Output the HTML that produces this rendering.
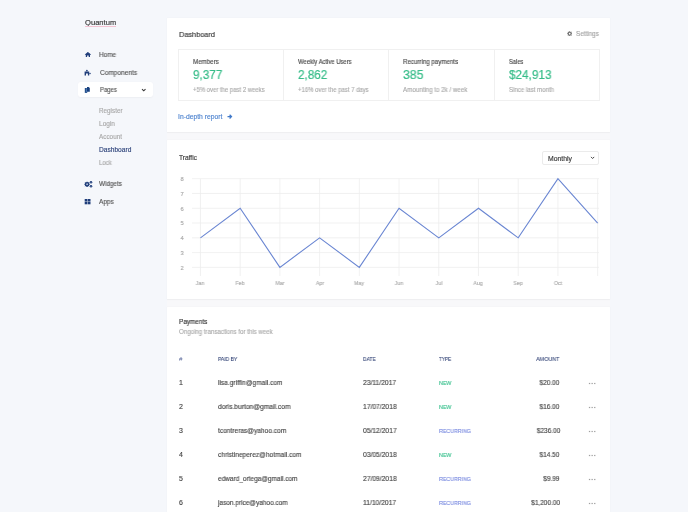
<!DOCTYPE html>
<html><head><meta charset="utf-8"><style>
html,body{margin:0;padding:0;}
body{width:688px;height:512px;overflow:hidden;background:#f5f7fb;position:relative;font-family:"Liberation Sans",sans-serif;}
.t{position:absolute;white-space:nowrap;-webkit-text-stroke:0.14px currentColor;will-change:transform;}
.card{position:absolute;background:#fff;border-radius:0.5px;box-shadow:0 0.8px 1.2px rgba(0,0,0,0.04),0 0 2.5px rgba(0,0,0,0.02);}
</style></head><body>
<div class="t" style="left:84.90px;top:19px;font-size:7.6px;line-height:7.6px;color:#2e2e2e;transform:scaleX(0.9949);transform-origin:0 0;">Quantum</div>
<div style="position:absolute;left:85px;top:26.3px;width:31px;height:1px;background:#f4c4d3"></div>
<div class="t" style="left:99.40px;top:52px;font-size:6.7px;line-height:6.7px;color:#555555;transform:scaleX(0.9622);transform-origin:0 0;">Home</div>
<div class="t" style="left:99.50px;top:70px;font-size:6.8px;line-height:6.8px;color:#555555;transform:scaleX(0.9596);transform-origin:0 0;">Components</div>
<div style="position:absolute;left:77.6px;top:82.0px;width:75px;height:14.8px;background:#fff;border-radius:3px;box-shadow:0 0.8px 1.5px rgba(0,0,0,0.035)"></div>
<div class="t" style="left:99.50px;top:87px;font-size:6.6px;line-height:6.6px;color:#555555;transform:scaleX(0.8979);transform-origin:0 0;">Pages</div>
<div class="t" style="left:98.90px;top:108px;font-size:6.3px;line-height:6.3px;color:#a9a9a9;transform:scaleX(1.0017);transform-origin:0 0;">Register</div>
<div class="t" style="left:99.00px;top:121px;font-size:6.3px;line-height:6.3px;color:#a9a9a9;transform:scaleX(1.0379);transform-origin:0 0;">Login</div>
<div class="t" style="left:99.10px;top:134px;font-size:6.3px;line-height:6.3px;color:#a9a9a9;transform:scaleX(1.0105);transform-origin:0 0;">Account</div>
<div class="t" style="left:99.10px;top:147px;font-size:6.5px;line-height:6.5px;color:#33487e;transform:scaleX(1.0158);transform-origin:0 0;-webkit-text-stroke:0.16px #33487e;">Dashboard</div>
<div class="t" style="left:99.10px;top:160px;font-size:6.3px;line-height:6.3px;color:#a9a9a9;transform:scaleX(0.9461);transform-origin:0 0;">Lock</div>
<div class="t" style="left:99.30px;top:181px;font-size:6.6px;line-height:6.6px;color:#555555;transform:scaleX(0.9606);transform-origin:0 0;">Widgets</div>
<div class="t" style="left:99.30px;top:199px;font-size:6.6px;line-height:6.6px;color:#555555;transform:scaleX(0.9773);transform-origin:0 0;">Apps</div>
<svg style="position:absolute;left:84px;top:51px" width="8" height="7" viewBox="0 0 8 7"><path d="M3.9 0.9 L7 3.4 L6.5 4 L3.9 1.9 L1.3 4 L0.8 3.4 Z" fill="#1f3d7a"/><path d="M1.8 3.3 L3.9 1.6 L6 3.3 V6 H4.7 V4.5 H3.1 V6 H1.8 Z" fill="#1f3d7a"/></svg>
<svg style="position:absolute;left:84px;top:69px" width="8" height="8" viewBox="0 0 8 8"><circle cx="2.9" cy="1.6" r="0.85" fill="#1f3d7a"/><path d="M0.6 2.5 H5.2 V6.4 H3.9 V4.6 H2.0 V6.4 H0.6 Z" fill="#1f3d7a"/><circle cx="6.0" cy="4.4" r="0.75" fill="#1f3d7a"/></svg>
<svg style="position:absolute;left:84px;top:86px" width="7" height="8" viewBox="0 0 7 8"><path d="M0.8 2.0 H3.2 V6.9 H0.8 Z" fill="#24508c"/><path d="M3.0 1.0 H4.6 L5.8 2.1 V5.7 H3.0 Z" fill="#173f7e"/><path d="M2.5 2.3 H3.0 V6.0 H2.5 Z" fill="#6f9ad0"/></svg>
<svg style="position:absolute;left:141.0px;top:87.8px" width="6" height="5" viewBox="0 0 6 5"><path d="M1.0 1.1 L2.75 2.8 L4.5 1.1" stroke="#3a3a3a" stroke-width="1.1" fill="none"/></svg>
<svg style="position:absolute;left:84px;top:180px" width="9" height="8" viewBox="0 0 9 8"><circle cx="3.1" cy="4.3" r="1.7" fill="none" stroke="#1f3d7a" stroke-width="1.4"/><g stroke="#1f3d7a" stroke-width="0.9"><path d="M3.1 1.7V6.9M0.5 4.3H5.7M1.25 2.45L4.95 6.15M1.25 6.15L4.95 2.45"/></g><circle cx="3.1" cy="4.3" r="0.8" fill="#e3eaf5"/><circle cx="7.0" cy="2.2" r="1.25" fill="#1f3d7a"/><circle cx="7.0" cy="6.2" r="1.25" fill="#1f3d7a"/><circle cx="7.0" cy="2.2" r="0.4" fill="#e3eaf5"/><circle cx="7.0" cy="6.2" r="0.4" fill="#e3eaf5"/></svg>
<svg style="position:absolute;left:84px;top:198px" width="8" height="8" viewBox="0 0 8 8"><rect x="0.7" y="1.0" width="2.7" height="2.5" fill="#1f3d7a"/><rect x="3.8" y="1.0" width="2.7" height="2.5" fill="#1f3d7a"/><rect x="0.7" y="3.8" width="2.7" height="2.5" fill="#1f3d7a"/><rect x="3.8" y="3.8" width="2.7" height="2.5" fill="#1f3d7a"/></svg>
<div style="position:absolute;left:167.2px;top:132px;width:442.6px;height:175.5px;background:#f8f8fa"></div>
<div class="card" style="left:167.2px;top:18.2px;width:442.60px;height:114.10px"></div>
<div class="card" style="left:167.2px;top:139.6px;width:442.60px;height:159.40px"></div>
<div class="card" style="left:167.2px;top:307.0px;width:442.60px;height:253.00px"></div>
<div class="t" style="left:178.90px;top:31px;font-size:7.8px;line-height:7.8px;color:#333;transform:scaleX(0.9435);transform-origin:0 0;">Dashboard</div>
<svg style="position:absolute;left:566.9px;top:31.1px" width="5.4" height="5.4" viewBox="0 0 5.4 5.4"><g fill="#6e6e6e"><circle cx="2.7" cy="2.7" r="1.8"/><rect x="2.2" y="0.15" width="1" height="5.1"/><rect x="0.15" y="2.2" width="5.1" height="1"/><rect x="2.2" y="0.15" width="1" height="5.1" transform="rotate(45 2.7 2.7)"/><rect x="2.2" y="0.15" width="1" height="5.1" transform="rotate(-45 2.7 2.7)"/></g><circle cx="2.7" cy="2.7" r="0.85" fill="#fff"/></svg>
<div class="t" style="left:576.00px;top:31px;font-size:6.6px;line-height:6.6px;color:#a3a3a3;transform:scaleX(0.9603);transform-origin:0 0;">Settings</div>
<div style="position:absolute;left:178px;top:49px;width:422px;height:52px;border:1px solid #f0f0f0;box-sizing:border-box"></div>
<div style="position:absolute;left:283px;top:49px;width:1px;height:52px;background:#f0f0f0"></div>
<div style="position:absolute;left:388px;top:49px;width:1px;height:52px;background:#f0f0f0"></div>
<div style="position:absolute;left:494px;top:49px;width:1px;height:52px;background:#f0f0f0"></div>
<div class="t" style="left:193.10px;top:59px;font-size:6.5px;line-height:6.5px;color:#484848;transform:scaleX(0.9523);transform-origin:0 0;">Members</div>
<div class="t" style="left:193.10px;top:69px;font-size:12.8px;line-height:12.8px;color:#38bd8a;transform:scaleX(0.9149);transform-origin:0 0;-webkit-text-stroke:0.22px #38bd8a;">9,377</div>
<div class="t" style="left:193.10px;top:87px;font-size:6.3px;line-height:6.3px;color:#ababab;transform:scaleX(0.9443);transform-origin:0 0;">+5% over the past 2 weeks</div>
<div class="t" style="left:298.30px;top:59px;font-size:6.5px;line-height:6.5px;color:#484848;transform:scaleX(0.9067);transform-origin:0 0;">Weekly Active Users</div>
<div class="t" style="left:298.30px;top:69px;font-size:12.8px;line-height:12.8px;color:#38bd8a;transform:scaleX(0.9118);transform-origin:0 0;-webkit-text-stroke:0.22px #38bd8a;">2,862</div>
<div class="t" style="left:298.30px;top:87px;font-size:6.3px;line-height:6.3px;color:#ababab;transform:scaleX(0.9455);transform-origin:0 0;">+16% over the past 7 days</div>
<div class="t" style="left:403.40px;top:59px;font-size:6.5px;line-height:6.5px;color:#484848;transform:scaleX(0.9474);transform-origin:0 0;">Recurring payments</div>
<div class="t" style="left:403.40px;top:69px;font-size:12.8px;line-height:12.8px;color:#38bd8a;transform:scaleX(0.9602);transform-origin:0 0;-webkit-text-stroke:0.22px #38bd8a;">385</div>
<div class="t" style="left:403.40px;top:87px;font-size:6.3px;line-height:6.3px;color:#ababab;transform:scaleX(0.9847);transform-origin:0 0;">Amounting to 2k / week</div>
<div class="t" style="left:508.80px;top:59px;font-size:6.5px;line-height:6.5px;color:#484848;transform:scaleX(0.8796);transform-origin:0 0;">Sales</div>
<div class="t" style="left:508.80px;top:69px;font-size:12.8px;line-height:12.8px;color:#38bd8a;transform:scaleX(0.9185);transform-origin:0 0;-webkit-text-stroke:0.22px #38bd8a;">$24,913</div>
<div class="t" style="left:508.80px;top:87px;font-size:6.3px;line-height:6.3px;color:#ababab;transform:scaleX(0.9662);transform-origin:0 0;">Since last month</div>
<div class="t" style="left:178.20px;top:114px;font-size:6.7px;line-height:6.7px;color:#4f84cf;transform:scaleX(1.0102);transform-origin:0 0;">In-depth report</div>
<svg style="position:absolute;left:226.5px;top:114px" width="6" height="6" viewBox="0 0 6 6"><path d="M0.5 2.6H4.6M2.6 0.7L4.5 2.6L2.6 4.5" stroke="#4079c9" stroke-width="1.25" fill="none"/></svg>
<div class="t" style="left:178.70px;top:155px;font-size:6.6px;line-height:6.6px;color:#333;transform:scaleX(0.9904);transform-origin:0 0;">Traffic</div>
<div style="position:absolute;left:542.4px;top:150.5px;width:56.3px;height:14.5px;border:0.8px solid #ebebeb;border-radius:2px;box-sizing:border-box;background:#fff"></div>
<div class="t" style="left:547.70px;top:156px;font-size:6.8px;line-height:6.8px;color:#333;transform:scaleX(1.0039);transform-origin:0 0;">Monthly</div>
<svg style="position:absolute;left:589.5px;top:156px" width="5.5" height="4" viewBox="0 0 5.5 4"><path d="M1 0.9 L2.6 2.5 L4.2 0.9" stroke="#333" stroke-width="0.9" fill="none"/></svg>
<svg style="position:absolute;left:0;top:0" width="688" height="512" viewBox="0 0 688 512"><line x1="192" y1="267.38" x2="599.0" y2="267.38" stroke="#eeeeee" stroke-width="0.8"/><line x1="192" y1="252.60" x2="599.0" y2="252.60" stroke="#eeeeee" stroke-width="0.8"/><line x1="192" y1="237.82" x2="599.0" y2="237.82" stroke="#eeeeee" stroke-width="0.8"/><line x1="192" y1="223.04" x2="599.0" y2="223.04" stroke="#eeeeee" stroke-width="0.8"/><line x1="192" y1="208.26" x2="599.0" y2="208.26" stroke="#eeeeee" stroke-width="0.8"/><line x1="192" y1="193.48" x2="599.0" y2="193.48" stroke="#eeeeee" stroke-width="0.8"/><line x1="192" y1="178.70" x2="599.0" y2="178.70" stroke="#eeeeee" stroke-width="0.8"/><line x1="200.45" y1="178.70" x2="200.45" y2="276.0" stroke="#eeeeee" stroke-width="0.8"/><line x1="240.17" y1="178.70" x2="240.17" y2="276.0" stroke="#eeeeee" stroke-width="0.8"/><line x1="279.89" y1="178.70" x2="279.89" y2="276.0" stroke="#eeeeee" stroke-width="0.8"/><line x1="319.61" y1="178.70" x2="319.61" y2="276.0" stroke="#eeeeee" stroke-width="0.8"/><line x1="359.33" y1="178.70" x2="359.33" y2="276.0" stroke="#eeeeee" stroke-width="0.8"/><line x1="399.05" y1="178.70" x2="399.05" y2="276.0" stroke="#eeeeee" stroke-width="0.8"/><line x1="438.77" y1="178.70" x2="438.77" y2="276.0" stroke="#eeeeee" stroke-width="0.8"/><line x1="478.49" y1="178.70" x2="478.49" y2="276.0" stroke="#eeeeee" stroke-width="0.8"/><line x1="518.21" y1="178.70" x2="518.21" y2="276.0" stroke="#eeeeee" stroke-width="0.8"/><line x1="557.93" y1="178.70" x2="557.93" y2="276.0" stroke="#eeeeee" stroke-width="0.8"/><line x1="597.65" y1="178.70" x2="597.65" y2="276.0" stroke="#eeeeee" stroke-width="0.8"/><polyline points="200.45,237.82 240.17,208.26 279.89,267.38 319.61,237.82 359.33,267.38 399.05,208.26 438.77,237.82 478.49,208.26 518.21,237.82 557.93,178.70 597.65,223.04" fill="none" stroke="#6a86d2" stroke-width="1.1" stroke-linejoin="miter"/></svg>
<div class="t" style="left:132.30px;width:100px;text-align:center;top:266px;font-size:5.8px;line-height:5.8px;color:#ababab;">2</div>
<div class="t" style="left:132.30px;width:100px;text-align:center;top:251px;font-size:5.8px;line-height:5.8px;color:#ababab;">3</div>
<div class="t" style="left:132.30px;width:100px;text-align:center;top:236px;font-size:5.8px;line-height:5.8px;color:#ababab;">4</div>
<div class="t" style="left:132.30px;width:100px;text-align:center;top:221px;font-size:5.8px;line-height:5.8px;color:#ababab;">5</div>
<div class="t" style="left:132.30px;width:100px;text-align:center;top:207px;font-size:5.8px;line-height:5.8px;color:#ababab;">6</div>
<div class="t" style="left:132.30px;width:100px;text-align:center;top:192px;font-size:5.8px;line-height:5.8px;color:#ababab;">7</div>
<div class="t" style="left:132.30px;width:100px;text-align:center;top:177px;font-size:5.8px;line-height:5.8px;color:#ababab;">8</div>
<div class="t" style="left:150.45px;width:100px;text-align:center;top:281px;font-size:5.9px;line-height:5.9px;color:#ababab;transform:scaleX(0.9);transform-origin:50% 0;">Jan</div>
<div class="t" style="left:190.17px;width:100px;text-align:center;top:281px;font-size:5.9px;line-height:5.9px;color:#ababab;transform:scaleX(0.9);transform-origin:50% 0;">Feb</div>
<div class="t" style="left:229.89px;width:100px;text-align:center;top:281px;font-size:5.9px;line-height:5.9px;color:#ababab;transform:scaleX(0.9);transform-origin:50% 0;">Mar</div>
<div class="t" style="left:269.61px;width:100px;text-align:center;top:281px;font-size:5.9px;line-height:5.9px;color:#ababab;transform:scaleX(0.9);transform-origin:50% 0;">Apr</div>
<div class="t" style="left:309.33px;width:100px;text-align:center;top:281px;font-size:5.9px;line-height:5.9px;color:#ababab;transform:scaleX(0.9);transform-origin:50% 0;">May</div>
<div class="t" style="left:349.05px;width:100px;text-align:center;top:281px;font-size:5.9px;line-height:5.9px;color:#ababab;transform:scaleX(0.9);transform-origin:50% 0;">Jun</div>
<div class="t" style="left:388.77px;width:100px;text-align:center;top:281px;font-size:5.9px;line-height:5.9px;color:#ababab;transform:scaleX(0.9);transform-origin:50% 0;">Jul</div>
<div class="t" style="left:428.49px;width:100px;text-align:center;top:281px;font-size:5.9px;line-height:5.9px;color:#ababab;transform:scaleX(0.9);transform-origin:50% 0;">Aug</div>
<div class="t" style="left:468.21px;width:100px;text-align:center;top:281px;font-size:5.9px;line-height:5.9px;color:#ababab;transform:scaleX(0.9);transform-origin:50% 0;">Sep</div>
<div class="t" style="left:507.93px;width:100px;text-align:center;top:281px;font-size:5.9px;line-height:5.9px;color:#ababab;transform:scaleX(0.9);transform-origin:50% 0;">Oct</div>
<div class="t" style="left:178.50px;top:319px;font-size:6.6px;line-height:6.6px;color:#333;transform:scaleX(0.9678);transform-origin:0 0;">Payments</div>
<div class="t" style="left:178.50px;top:329px;font-size:6.3px;line-height:6.3px;color:#ababab;transform:scaleX(0.9694);transform-origin:0 0;">Ongoing transactions for this week</div>
<div class="t" style="left:178.50px;top:356px;font-size:6.2px;line-height:6.2px;color:#56659a;-webkit-text-stroke:0;">#</div>
<div class="t" style="left:218.20px;top:356px;font-size:6.1px;line-height:6.1px;color:#3f4f7f;transform:scaleX(0.8171);transform-origin:0 0;">PAID BY</div>
<div class="t" style="left:363.10px;top:356px;font-size:6.1px;line-height:6.1px;color:#3f4f7f;transform:scaleX(0.8092);transform-origin:0 0;">DATE</div>
<div class="t" style="left:438.60px;top:356px;font-size:6.1px;line-height:6.1px;color:#3f4f7f;transform:scaleX(0.7657);transform-origin:0 0;">TYPE</div>
<div class="t" style="right:128.40px;top:356px;font-size:6.1px;line-height:6.1px;color:#3f4f7f;transform:scaleX(0.8815);transform-origin:100% 0;">AMOUNT</div>
<div class="t" style="left:178.60px;top:379px;font-size:7.0px;line-height:7.0px;color:#444;">1</div>
<div class="t" style="left:217.80px;top:379px;font-size:7.0px;line-height:7.0px;color:#444;transform:scaleX(0.9424);transform-origin:0 0;">lisa.griffin@gmail.com</div>
<div class="t" style="left:363.10px;top:379px;font-size:7.0px;line-height:7.0px;color:#444;transform:scaleX(0.96);transform-origin:0 0;">23/11/2017</div>
<div class="t" style="left:438.70px;top:381px;font-size:5.8px;line-height:5.8px;color:#3cc18f;transform:scaleX(0.91);transform-origin:0 0;">NEW</div>
<div class="t" style="right:128.20px;top:379px;font-size:7.0px;line-height:7.0px;color:#444;transform:scaleX(0.93);transform-origin:100% 0;">$20.00</div>
<svg style="position:absolute;left:588px;top:381px" width="9" height="4" viewBox="0 0 9 4"><g fill="#a0a0a0"><rect x="0.9" y="1.9" width="1.3" height="1.2"/><rect x="3.5" y="1.9" width="1.3" height="1.2"/><rect x="6.1" y="1.9" width="1.3" height="1.2"/></g></svg>
<div class="t" style="left:178.60px;top:403px;font-size:7.0px;line-height:7.0px;color:#444;">2</div>
<div class="t" style="left:217.80px;top:403px;font-size:7.0px;line-height:7.0px;color:#444;transform:scaleX(0.9543);transform-origin:0 0;">doris.burton@gmail.com</div>
<div class="t" style="left:363.10px;top:403px;font-size:7.0px;line-height:7.0px;color:#444;transform:scaleX(0.96);transform-origin:0 0;">17/07/2018</div>
<div class="t" style="left:438.70px;top:405px;font-size:5.8px;line-height:5.8px;color:#3cc18f;transform:scaleX(0.91);transform-origin:0 0;">NEW</div>
<div class="t" style="right:128.20px;top:403px;font-size:7.0px;line-height:7.0px;color:#444;transform:scaleX(0.93);transform-origin:100% 0;">$16.00</div>
<svg style="position:absolute;left:588px;top:405px" width="9" height="4" viewBox="0 0 9 4"><g fill="#a0a0a0"><rect x="0.9" y="1.9" width="1.3" height="1.2"/><rect x="3.5" y="1.9" width="1.3" height="1.2"/><rect x="6.1" y="1.9" width="1.3" height="1.2"/></g></svg>
<div class="t" style="left:178.60px;top:427px;font-size:7.0px;line-height:7.0px;color:#444;">3</div>
<div class="t" style="left:217.80px;top:427px;font-size:7.0px;line-height:7.0px;color:#444;transform:scaleX(0.9411);transform-origin:0 0;">tcontreras@yahoo.com</div>
<div class="t" style="left:363.10px;top:427px;font-size:7.0px;line-height:7.0px;color:#444;transform:scaleX(0.96);transform-origin:0 0;">05/12/2017</div>
<div class="t" style="left:438.70px;top:429px;font-size:5.8px;line-height:5.8px;color:#7b8ce0;transform:scaleX(0.91);transform-origin:0 0;">RECURRING</div>
<div class="t" style="right:128.20px;top:427px;font-size:7.0px;line-height:7.0px;color:#444;transform:scaleX(0.93);transform-origin:100% 0;">$236.00</div>
<svg style="position:absolute;left:588px;top:429px" width="9" height="4" viewBox="0 0 9 4"><g fill="#a0a0a0"><rect x="0.9" y="1.9" width="1.3" height="1.2"/><rect x="3.5" y="1.9" width="1.3" height="1.2"/><rect x="6.1" y="1.9" width="1.3" height="1.2"/></g></svg>
<div class="t" style="left:178.60px;top:451px;font-size:7.0px;line-height:7.0px;color:#444;">4</div>
<div class="t" style="left:217.80px;top:451px;font-size:7.0px;line-height:7.0px;color:#444;transform:scaleX(0.9444);transform-origin:0 0;">christineperez@hotmail.com</div>
<div class="t" style="left:363.10px;top:451px;font-size:7.0px;line-height:7.0px;color:#444;transform:scaleX(0.96);transform-origin:0 0;">03/05/2018</div>
<div class="t" style="left:438.70px;top:453px;font-size:5.8px;line-height:5.8px;color:#3cc18f;transform:scaleX(0.91);transform-origin:0 0;">NEW</div>
<div class="t" style="right:128.20px;top:451px;font-size:7.0px;line-height:7.0px;color:#444;transform:scaleX(0.93);transform-origin:100% 0;">$14.50</div>
<svg style="position:absolute;left:588px;top:453px" width="9" height="4" viewBox="0 0 9 4"><g fill="#a0a0a0"><rect x="0.9" y="1.9" width="1.3" height="1.2"/><rect x="3.5" y="1.9" width="1.3" height="1.2"/><rect x="6.1" y="1.9" width="1.3" height="1.2"/></g></svg>
<div class="t" style="left:178.60px;top:475px;font-size:7.0px;line-height:7.0px;color:#444;">5</div>
<div class="t" style="left:217.80px;top:475px;font-size:7.0px;line-height:7.0px;color:#444;transform:scaleX(0.9276);transform-origin:0 0;">edward_ortega@gmail.com</div>
<div class="t" style="left:363.10px;top:475px;font-size:7.0px;line-height:7.0px;color:#444;transform:scaleX(0.96);transform-origin:0 0;">27/09/2018</div>
<div class="t" style="left:438.70px;top:477px;font-size:5.8px;line-height:5.8px;color:#7b8ce0;transform:scaleX(0.91);transform-origin:0 0;">RECURRING</div>
<div class="t" style="right:128.20px;top:475px;font-size:7.0px;line-height:7.0px;color:#444;transform:scaleX(0.93);transform-origin:100% 0;">$9.99</div>
<svg style="position:absolute;left:588px;top:477px" width="9" height="4" viewBox="0 0 9 4"><g fill="#a0a0a0"><rect x="0.9" y="1.9" width="1.3" height="1.2"/><rect x="3.5" y="1.9" width="1.3" height="1.2"/><rect x="6.1" y="1.9" width="1.3" height="1.2"/></g></svg>
<div class="t" style="left:178.60px;top:499px;font-size:7.0px;line-height:7.0px;color:#444;">6</div>
<div class="t" style="left:217.96px;top:499px;font-size:7.0px;line-height:7.0px;color:#444;transform:scaleX(0.9274);transform-origin:0 0;">jason.price@yahoo.com</div>
<div class="t" style="left:363.10px;top:499px;font-size:7.0px;line-height:7.0px;color:#444;transform:scaleX(0.96);transform-origin:0 0;">11/10/2017</div>
<div class="t" style="left:438.70px;top:501px;font-size:5.8px;line-height:5.8px;color:#7b8ce0;transform:scaleX(0.91);transform-origin:0 0;">RECURRING</div>
<div class="t" style="right:128.20px;top:499px;font-size:7.0px;line-height:7.0px;color:#444;transform:scaleX(0.93);transform-origin:100% 0;">$1,200.00</div>
<svg style="position:absolute;left:588px;top:501px" width="9" height="4" viewBox="0 0 9 4"><g fill="#a0a0a0"><rect x="0.9" y="1.9" width="1.3" height="1.2"/><rect x="3.5" y="1.9" width="1.3" height="1.2"/><rect x="6.1" y="1.9" width="1.3" height="1.2"/></g></svg>
</body></html>
